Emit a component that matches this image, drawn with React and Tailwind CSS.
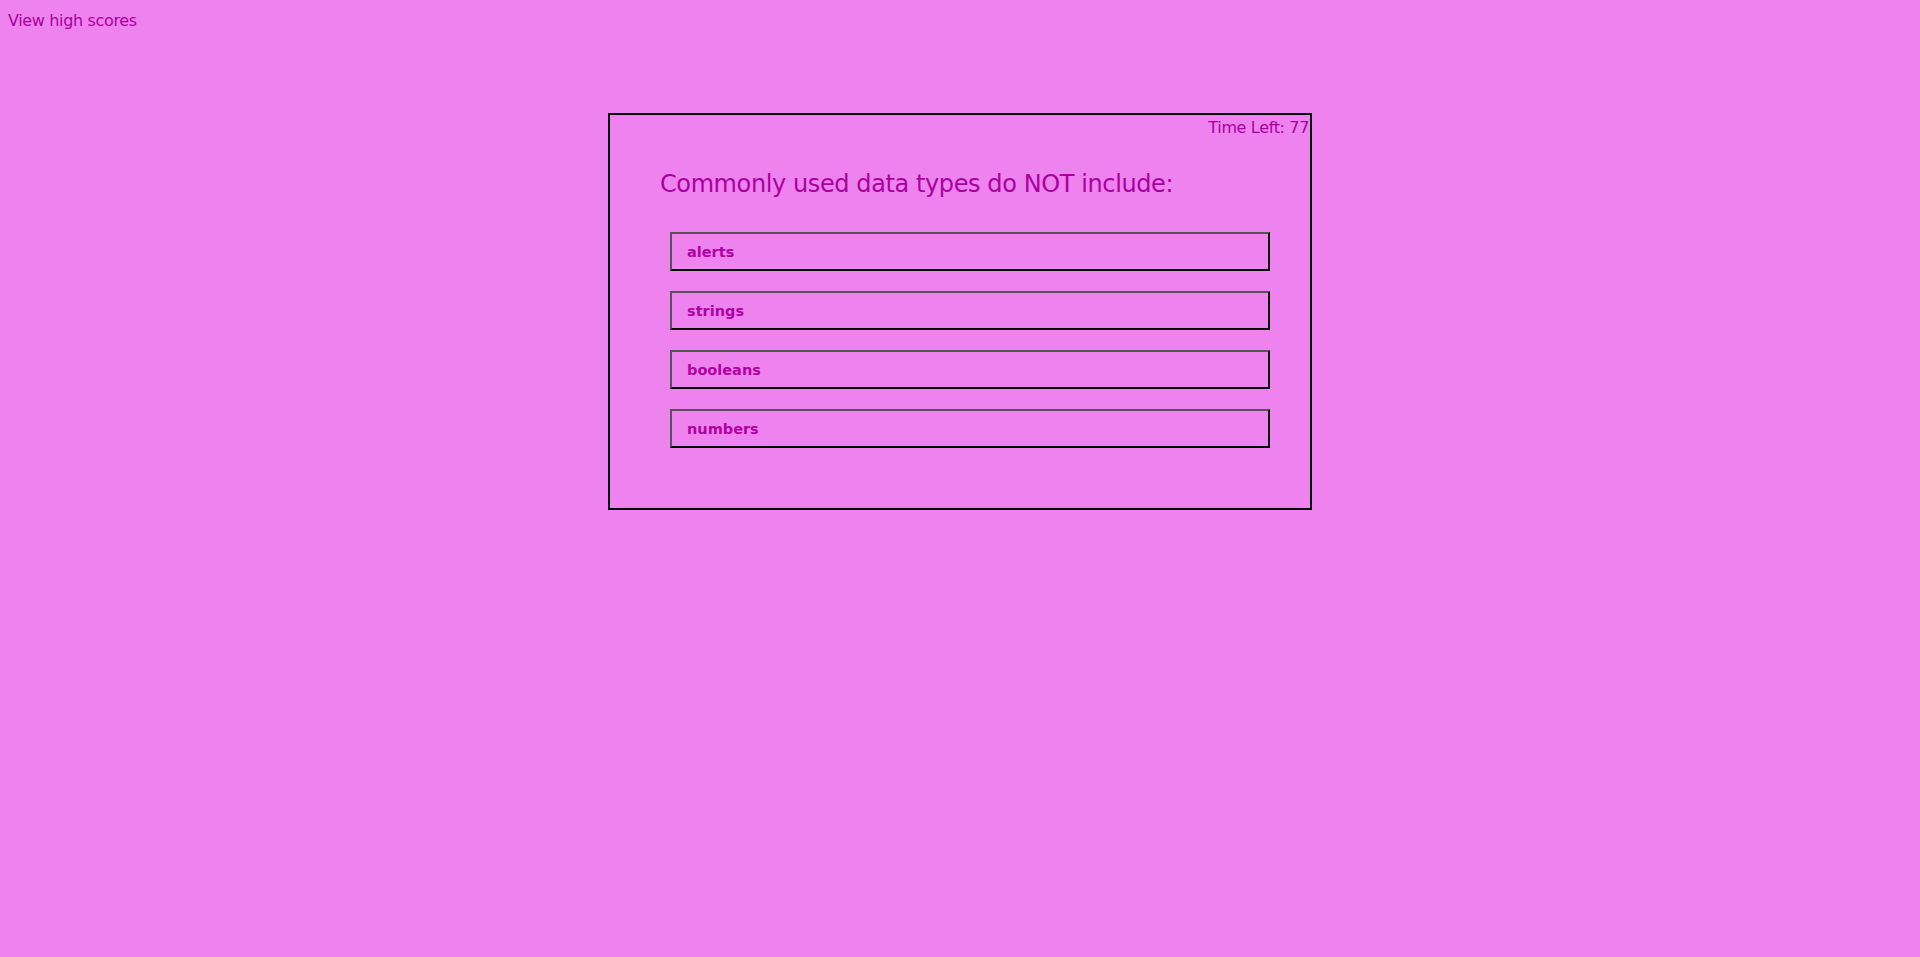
const choices = ['alerts', 'strings', 'booleans', 'numbers'];

export default function App() {
  return (
    <div
      className="min-h-screen bg-[#ee82ee] text-[#aa00a0] tracking-[-0.35px]"
      style={{ fontFamily: '"DejaVu Sans", Verdana, sans-serif' }}
    >
      <div className="px-2 pt-[11px]">
        <a className="block h-[19px] text-base leading-[19px] cursor-pointer">View high scores</a>
      </div>

      <section className="mx-auto mt-[83px] w-[704px] border-2 border-black pb-[60px]">
        <div className="pt-[3px] pr-[1px] text-right text-base leading-[19px]">Time Left: 77</div>

        <h1 className="ml-[50px] mt-[33px] text-[24px] font-normal leading-[28px] tracking-[-0.4px]">
          Commonly used data types do NOT include:
        </h1>

        <div className="ml-[60px] mt-[34px] flex w-[600px] flex-col gap-[20px]">
          {choices.map((choice) => (
            <button
              key={choice}
              className="flex h-[39px] items-center border-2 border-solid border-t-[#555555] border-l-[#555555] border-b-black border-r-black bg-transparent pl-[15px] pt-[1px] text-left text-[14.5px] font-bold leading-4 tracking-normal text-[#b000a2]"
              style={{ fontFamily: '"DejaVu Sans", Verdana, sans-serif' }}
            >
              {choice}
            </button>
          ))}
        </div>
      </section>
    </div>
  );
}
